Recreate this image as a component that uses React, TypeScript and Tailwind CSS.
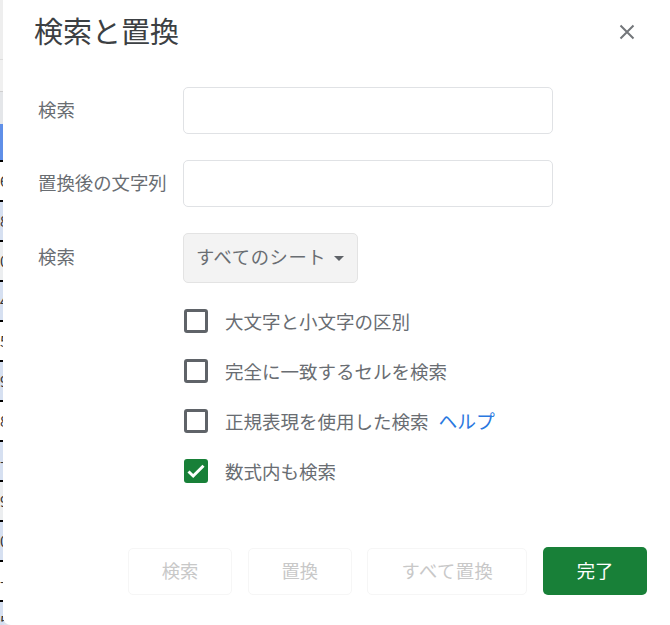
const font = { fontFamily: '"Noto Sans CJK JP", "Noto Sans", sans-serif' };

const rows: { bg: string; ch: string }[] = [
  { bg: "bg-white", ch: "6" },
  { bg: "bg-[#d6e0f1]", ch: "8" },
  { bg: "bg-[#eceef0]", ch: "0" },
  { bg: "bg-[#d6e0f1]", ch: "4" },
  { bg: "bg-white", ch: "5" },
  { bg: "bg-[#d6e0f1]", ch: "9" },
  { bg: "bg-white", ch: "8" },
  { bg: "bg-[#d6e0f1]", ch: "-" },
  { bg: "bg-[#eceef0]", ch: "9" },
  { bg: "bg-[#d6e0f1]", ch: "0" },
  { bg: "bg-white", ch: "-" },
  { bg: "bg-[#d6e0f1]", ch: "5" },
];

function Strip() {
  return (
    <div className="flex h-full w-[4px] shrink-0 flex-col overflow-hidden bg-[#eceef0]">
      <div className="h-[60px] shrink-0 border-b border-[#dcdcdc] bg-[#eeeeee]" />
      <div className="h-[32px] shrink-0 border-b border-[#cfcfcf] bg-[#f0f0f0]" />
      <div className="h-[32px] shrink-0 bg-[#e4e6e9]" />
      <div className="h-[36px] shrink-0 bg-[#5f8fe8]" />
      {rows.map((r, i) => (
        <div key={i} className={`h-[40px] shrink-0 overflow-hidden border-t-2 border-black ${r.bg}`}>
          <div className="w-[20px] text-[15px] leading-[38px] text-[#333]">{r.ch}</div>
        </div>
      ))}
    </div>
  );
}

function Check({ label, checked, help }: { label: string; checked?: boolean; help?: boolean }) {
  return (
    <div className="flex h-[50px] items-center">
      {checked ? (
        <div className="ml-[1px] flex h-[24px] w-[24px] items-center justify-center rounded-[3px] bg-[#188038]">
          <svg width="24" height="24" viewBox="0 0 24 24" fill="none">
            <path d="M4.5 12.5 L9.2 17 L19.5 6.8" stroke="#ffffff" strokeWidth="3" />
          </svg>
        </div>
      ) : (
        <div className="ml-[1px] h-[24px] w-[24px] rounded-[3px] border-[3px] border-[#5f6368]" />
      )}
      <span className="ml-[17px] text-[18.5px] leading-[24px] text-[#696d72]">{label}</span>
      {help && <span className="ml-[10px] text-[18.8px] leading-[24px] text-[#2a78e0]">ヘルプ</span>}
    </div>
  );
}

function Row({ label, children }: { label: string; children: React.ReactNode }) {
  return (
    <div className="flex items-center">
      <div className="-ml-[1px] w-[145px] pb-[4px] text-[18.4px] leading-[24px] text-[#696d72]">{label}</div>
      {children}
    </div>
  );
}

function Btn({ label, w, kana }: { label: string; w: string; kana?: boolean }) {
  return (
    <div className={`flex h-[47px] items-center justify-center rounded-[5px] border border-[#f6f6f6] text-[18.3px] text-[#c8c8c8] ${w} ${kana ? "tracking-[0.5px]" : ""}`}>
      {label}
    </div>
  );
}

export default function App() {
  return (
    <div className="flex h-[625px] w-[670px] overflow-hidden bg-[#dfe3ea]" style={font}>
      <Strip />
      <div className="-ml-[1px] flex h-full flex-1 flex-col rounded-bl-[8px] bg-white pl-[36px] pr-[23px]">
        <div className="flex h-[87px] items-start justify-between">
          <h1 className="mt-[9px] -ml-[5px] text-[29px] leading-[42px] font-normal text-[#3c4043]">検索と置換</h1>
          <svg className="mt-[24px] mr-[12px]" width="16" height="16" viewBox="0 0 16 16" fill="none">
            <path d="M1.5 1.5 L14.5 14.5 M14.5 1.5 L1.5 14.5" stroke="#73767a" strokeWidth="2" />
          </svg>
        </div>
        <div className="flex flex-col">
          <Row label="検索">
            <div className="h-[47px] w-[370px] rounded-[5px] border border-[#e0e2e5]" />
          </Row>
          <div className="mt-[26px]">
            <Row label="置換後の文字列">
              <div className="h-[47px] w-[370px] rounded-[5px] border border-[#e0e2e5]" />
            </Row>
          </div>
          <div className="mt-[26px]">
            <Row label="検索">
              <div className="flex h-[50px] w-[175px] items-center rounded-[5px] border border-[#e3e3e3] bg-[#f3f3f3] pl-[12px]">
                <span className="pb-[4px] text-[18.3px] leading-[24px] tracking-[0.6px] text-[#696d72]">すべてのシート</span>
                <span className="ml-[8px] mt-[1px] h-0 w-0 border-x-[5.5px] border-t-[5px] border-x-transparent border-t-[#5f6368]" />
              </div>
            </Row>
          </div>
        </div>
        <div className="mt-[13px] flex flex-col pl-[144px]">
          <Check label="大文字と小文字の区別" />
          <Check label="完全に一致するセルを検索" />
          <Check label="正規表現を使用した検索" help />
          <Check label="数式内も検索" checked />
        </div>
        <div className="mt-[51px] flex items-center justify-end gap-[15.67px]">
          <Btn label="検索" w="w-[104px]" />
          <Btn label="置換" w="w-[104px]" />
          <Btn label="すべて置換" w="w-[160px]" kana />
          <div className="flex h-[48px] w-[104px] items-center justify-center rounded-[5px] bg-[#188038] text-[18.3px] text-white">
            完了
          </div>
        </div>
      </div>
    </div>
  );
}
